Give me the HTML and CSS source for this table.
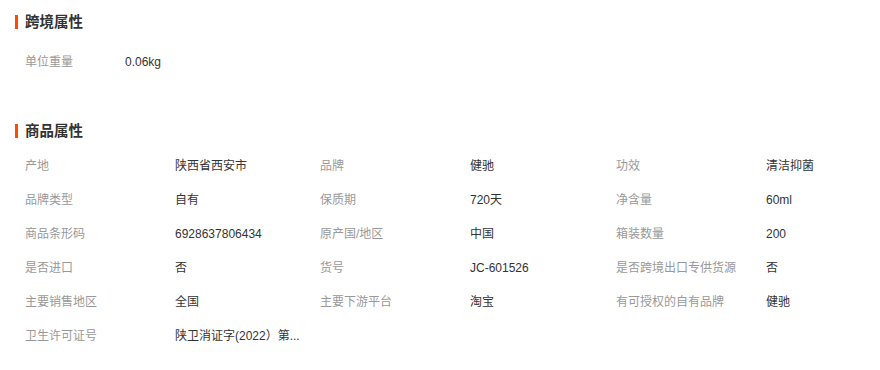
FILE: index.html
```html
<!DOCTYPE html>
<html lang="zh-CN">
<head>
<meta charset="utf-8">
<title>属性</title>
<link rel="stylesheet" href="styles.css">
</head>
<body>
<section class="block block-cross">
  <h2 class="block-title">跨境属性</h2>
  <div class="attr-list attr-list-single">
    <span class="attr-label">单位重量</span><span class="attr-value">0.06kg</span>
  </div>
</section>
<section class="block block-goods">
  <h2 class="block-title">商品属性</h2>
  <div class="attr-list attr-list-grid">
    <span class="attr-label">产地</span><span class="attr-value">陕西省西安市</span>
    <span class="attr-label">品牌</span><span class="attr-value">健驰</span>
    <span class="attr-label">功效</span><span class="attr-value">清洁抑菌</span>

    <span class="attr-label">品牌类型</span><span class="attr-value">自有</span>
    <span class="attr-label">保质期</span><span class="attr-value">720天</span>
    <span class="attr-label">净含量</span><span class="attr-value">60ml</span>

    <span class="attr-label">商品条形码</span><span class="attr-value">6928637806434</span>
    <span class="attr-label">原产国/地区</span><span class="attr-value">中国</span>
    <span class="attr-label">箱装数量</span><span class="attr-value">200</span>

    <span class="attr-label">是否进口</span><span class="attr-value">否</span>
    <span class="attr-label">货号</span><span class="attr-value">JC-601526</span>
    <span class="attr-label">是否跨境出口专供货源</span><span class="attr-value">否</span>

    <span class="attr-label">主要销售地区</span><span class="attr-value">全国</span>
    <span class="attr-label">主要下游平台</span><span class="attr-value">淘宝</span>
    <span class="attr-label">有可授权的自有品牌</span><span class="attr-value">健驰</span>

    <span class="attr-label">卫生许可证号</span><span class="attr-value">陕卫消证字(2022）第...</span>
  </div>
</section>
</body>
</html>
```
FILE: styles.css
```css
html, body {
  margin: 0;
  padding: 0;
  background: #fff;
}
body {
  font-family: "Liberation Sans", "Noto Sans CJK SC", sans-serif;
  font-size: 12px;
  color: #333;
  width: 880px;
  overflow: hidden;
}
.block {
  padding-left: 15px;
}
.block-cross {
  padding-top: 12px;
}
.block-goods {
  padding-top: 42px;
}
.block-title {
  margin: 0;
  display: flex;
  align-items: center;
  height: 20px;
  font-size: 14.5px;
  font-weight: bold;
  color: #333;
  line-height: 20px;
}
.block-title::before {
  content: "";
  display: block;
  width: 3px;
  height: 14px;
  background: #ff4a00;
  margin-right: 7px;
}
.attr-list {
  padding-left: 10px;
}
.attr-list-single {
  display: grid;
  grid-template-columns: 100px auto;
  margin-top: 13px;
}
.attr-list-grid {
  display: grid;
  grid-template-columns: 150px 145px 150px 146px 150px 1fr;
  margin-top: 8px;
}
.attr-label,
.attr-value {
  height: 34px;
  line-height: 34px;
  white-space: nowrap;
}
.attr-label {
  color: #999;
}
.attr-value {
  color: #333;
}
```
